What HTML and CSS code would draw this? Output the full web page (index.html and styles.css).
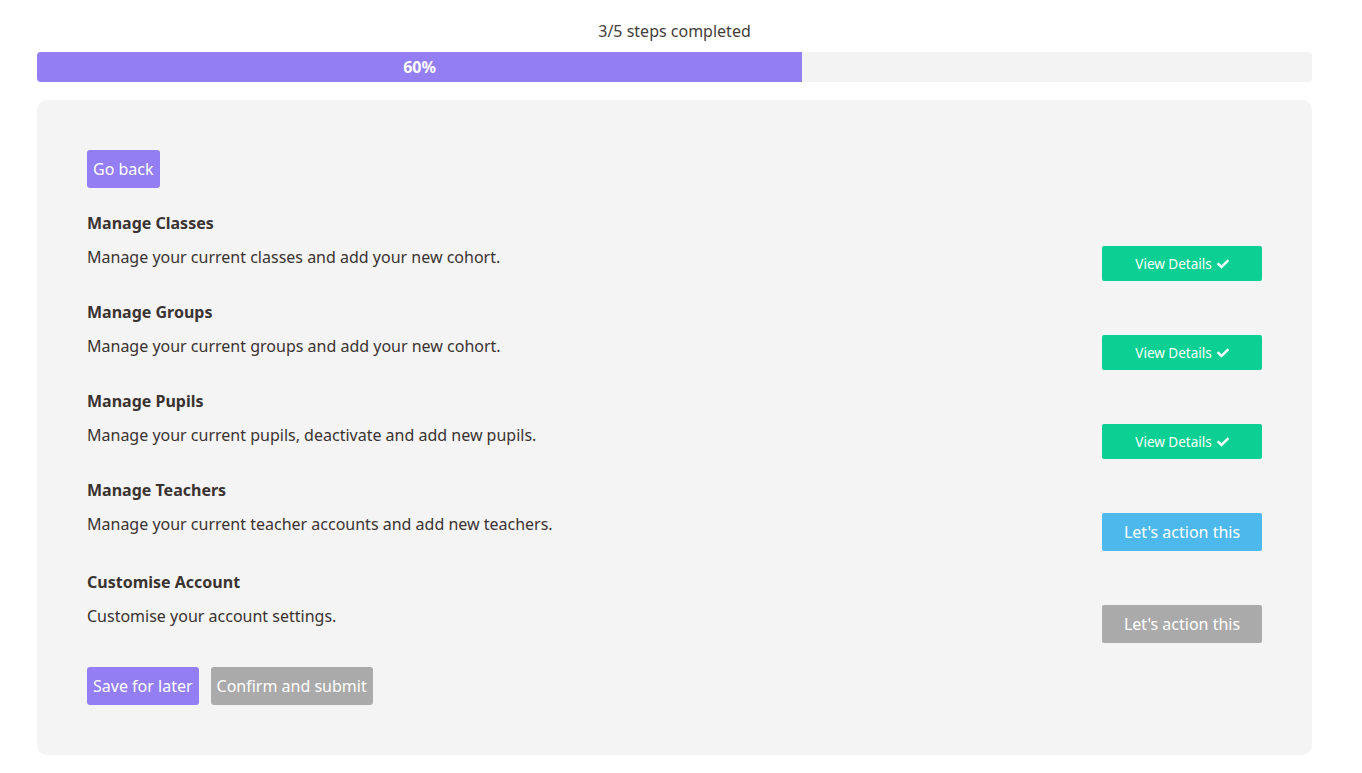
FILE: index.html
```html
<!DOCTYPE html>
<html lang="en">
<head>
<meta charset="utf-8">
<title>Steps</title>
<link rel="stylesheet" href="styles.css">
</head>
<body>
<div class="page">
  <div class="steps-label">3/5 steps completed</div>
  <div class="progress">
    <div class="progress-fill" style="width:60%">60%</div>
  </div>
  <div class="card">
    <button class="btn btn-purple btn-back">Go back</button>

    <div class="task">
      <div class="task-title">Manage Classes</div>
      <div class="task-row">
        <div class="task-desc">Manage your current classes and add your new cohort.</div>
        <button class="btn-side btn-green">View Details <svg class="check" viewBox="0 0 512 512"><path d="M173.898 439.404l-166.4-166.4c-9.997-9.997-9.997-26.206 0-36.204l36.203-36.204c9.997-9.998 26.207-9.998 36.204 0L192 312.69 432.095 72.596c9.997-9.997 26.207-9.997 36.204 0l36.203 36.204c9.997 9.997 9.997 26.206 0 36.204l-294.4 294.401c-9.998 9.997-26.207 9.997-36.204-.001z"/></svg></button>
      </div>
    </div>

    <div class="task">
      <div class="task-title">Manage Groups</div>
      <div class="task-row">
        <div class="task-desc">Manage your current groups and add your new cohort.</div>
        <button class="btn-side btn-green">View Details <svg class="check" viewBox="0 0 512 512"><path d="M173.898 439.404l-166.4-166.4c-9.997-9.997-9.997-26.206 0-36.204l36.203-36.204c9.997-9.998 26.207-9.998 36.204 0L192 312.69 432.095 72.596c9.997-9.997 26.207-9.997 36.204 0l36.203 36.204c9.997 9.997 9.997 26.206 0 36.204l-294.4 294.401c-9.998 9.997-26.207 9.997-36.204-.001z"/></svg></button>
      </div>
    </div>

    <div class="task">
      <div class="task-title">Manage Pupils</div>
      <div class="task-row">
        <div class="task-desc">Manage your current pupils, deactivate and add new pupils.</div>
        <button class="btn-side btn-green">View Details <svg class="check" viewBox="0 0 512 512"><path d="M173.898 439.404l-166.4-166.4c-9.997-9.997-9.997-26.206 0-36.204l36.203-36.204c9.997-9.998 26.207-9.998 36.204 0L192 312.69 432.095 72.596c9.997-9.997 26.207-9.997 36.204 0l36.203 36.204c9.997 9.997 9.997 26.206 0 36.204l-294.4 294.401c-9.998 9.997-26.207 9.997-36.204-.001z"/></svg></button>
      </div>
    </div>

    <div class="task">
      <div class="task-title">Manage Teachers</div>
      <div class="task-row">
        <div class="task-desc">Manage your current teacher accounts and add new teachers.</div>
        <button class="btn-side btn-action btn-blue">Let's action this</button>
      </div>
    </div>

    <div class="task">
      <div class="task-title">Customise Account</div>
      <div class="task-row">
        <div class="task-desc">Customise your account settings.</div>
        <button class="btn-side btn-action btn-grey">Let's action this</button>
      </div>
    </div>

    <div class="footer">
      <button class="btn btn-purple">Save for later</button>
      <button class="btn btn-grey">Confirm and submit</button>
    </div>
  </div>
</div>
</body>
</html>
```

FILE: styles.css
```css
html, body {
  margin: 0;
  padding: 0;
  background: #ffffff;
}

body {
  font-family: "Noto Sans", "Open Sans", Arial, sans-serif;
  color: #3a3331;
}

.page {
  width: 1275px;
  margin-left: 37px;
  padding-top: 19px;
}

.steps-label {
  text-align: center;
  font-size: 16px;
  line-height: 24px;
  color: #443d3b;
  margin-bottom: 9px;
}

.progress {
  height: 30px;
  background: #f3f3f3;
  border-radius: 4px;
  overflow: hidden;
  display: flex;
  margin-bottom: 18px;
}

.progress-fill {
  background: #937ef3;
  color: #ffffff;
  font-weight: 700;
  font-size: 16px;
  display: flex;
  align-items: center;
  justify-content: center;
}

.card {
  background: #f4f4f4;
  border-radius: 10px;
  padding: 50px;
}

.btn {
  font-family: inherit;
  font-size: 16px;
  color: #ffffff;
  border: none;
  border-radius: 3px;
  height: 38px;
  padding: 0 6px;
  line-height: 38px;
  white-space: nowrap;
  cursor: pointer;
}

.btn-back {
  display: block;
  margin-bottom: 23px;
}

.btn-purple {
  background: #937ef3;
}

.btn-grey {
  background: #aaaaaa;
}

.task {
  margin-bottom: 19px;
}

.task-title {
  font-weight: 700;
  font-size: 16px;
  line-height: 24px;
  color: #3a3331;
  margin-bottom: 10px;
}

.task-row {
  display: flex;
  justify-content: space-between;
  align-items: flex-start;
}

.task-desc {
  font-size: 16px;
  line-height: 24px;
  color: #3a3331;
}

.btn-side {
  width: 160px;
  height: 35px;
  margin-top: 1px;
  border: none;
  border-radius: 2px;
  font-family: inherit;
  font-size: 13.5px;
  color: #ffffff;
  display: flex;
  align-items: center;
  justify-content: center;
  gap: 5px;
  white-space: nowrap;
  cursor: pointer;
}

.btn-green {
  background: #0ccf93;
}

.btn-action {
  height: 38px;
  font-size: 16px;
}

.btn-blue {
  background: #4db8ec;
}

.check {
  width: 12px;
  height: 12px;
  fill: #ffffff;
}

.footer {
  display: flex;
  gap: 12px;
  margin-top: 24px;
}
```
